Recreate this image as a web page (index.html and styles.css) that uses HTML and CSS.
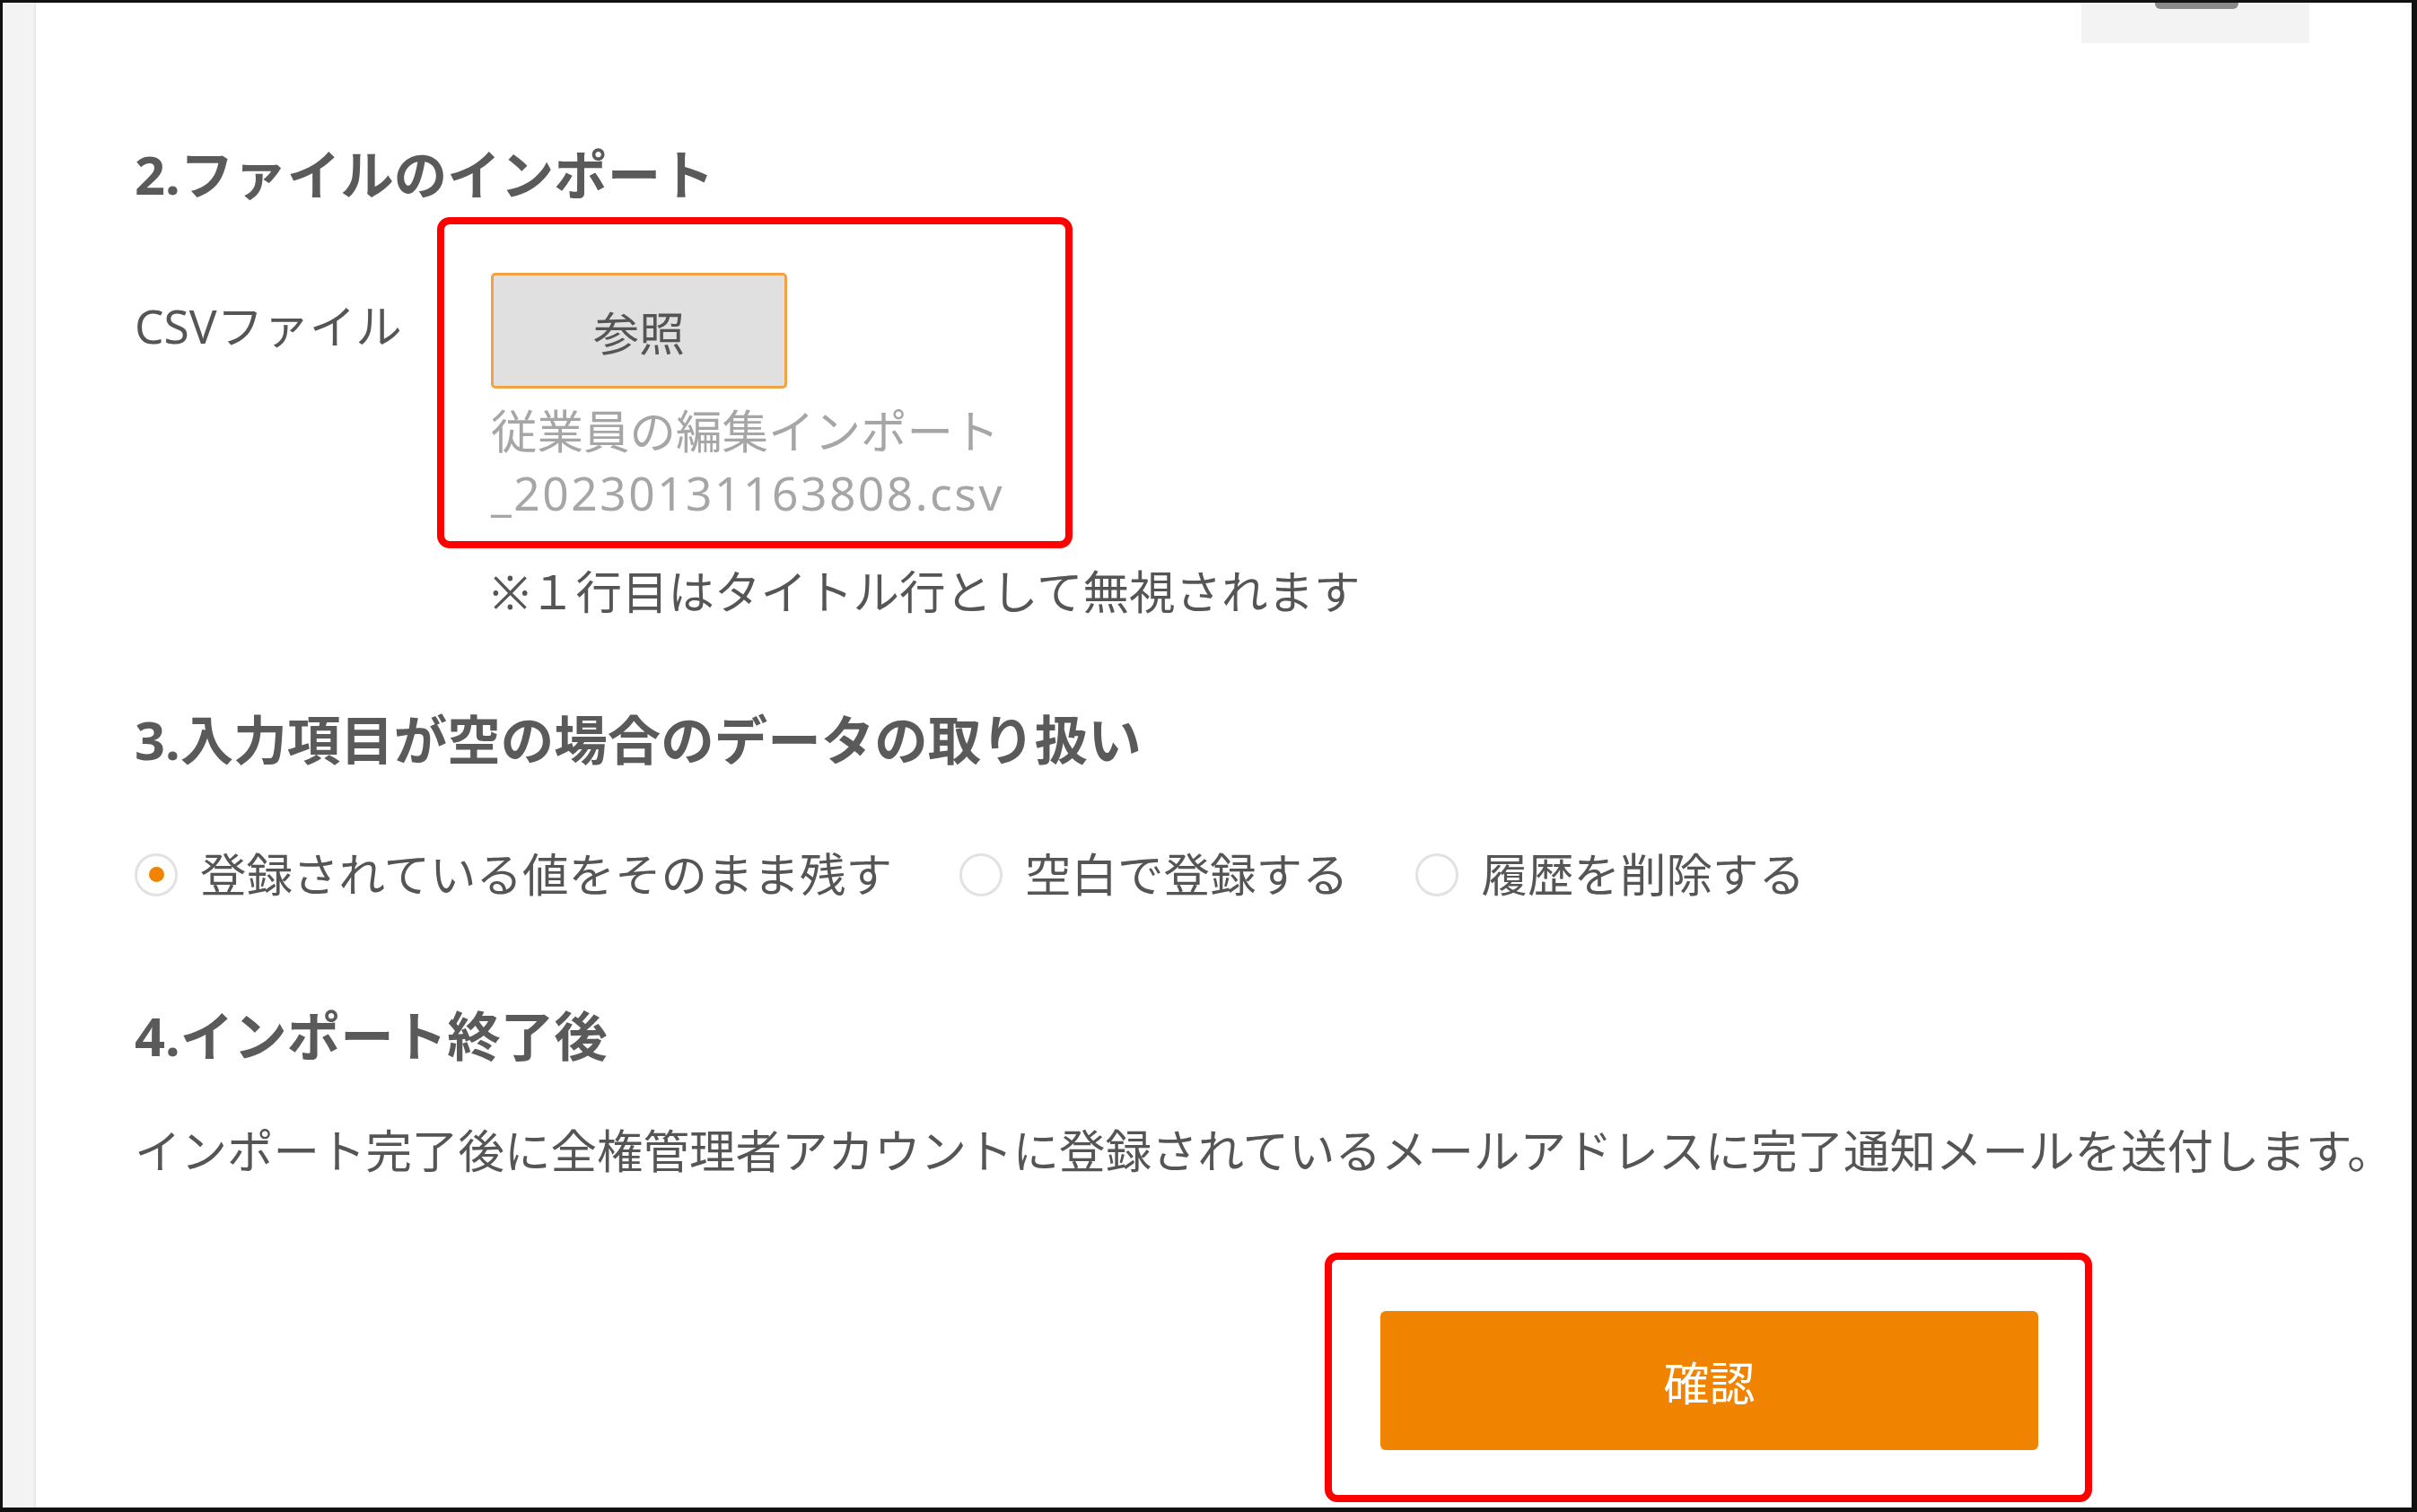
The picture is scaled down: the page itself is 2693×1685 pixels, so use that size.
FILE: index.html
```html
<!DOCTYPE html>
<html lang="ja">
<head>
    <meta charset="UTF-8">
    <meta name="viewport" content="width=device-width, initial-scale=1.0">
    <title>従業員のインポート</title>
    <link rel="stylesheet" href="styles.css">
</head>
<body>
    <div class="frame">
        <div class="side"></div>

        <div class="main">
            <div class="top-bar">
                <div class="top-tab"><span class="tab-grip"></span></div>
            </div>

            <h2 class="step">2.ファイルのインポート</h2>
            <div class="field">
                <div class="field-label">CSVファイル</div>
                <div class="field-body">
                    <div class="mark mark-file"></div>
                    <button class="browse-btn">参照</button>
                    <div class="file-name">従業員の編集インポート<br><span class="file-stamp">_20230131163808.csv</span></div>
                    <p class="note">※１行目はタイトル行として無視されます</p>
                </div>
            </div>

            <h2 class="step step-3">3.入力項目が空の場合のデータの取り扱い</h2>
            <div class="radios">
                <label class="radio"><span class="radio-dot checked"></span>登録されている値をそのまま残す</label>
                <label class="radio"><span class="radio-dot"></span>空白で登録する</label>
                <label class="radio"><span class="radio-dot"></span>履歴を削除する</label>
            </div>

            <h2 class="step step-4">4.インポート終了後</h2>
            <p class="desc">インポート完了後に全権管理者アカウントに登録されているメールアドレスに完了通知メールを送付します。</p>

            <div class="actions">
                <div class="mark mark-submit"></div>
                <button class="submit-btn">確認</button>
            </div>
        </div>
    </div>
</body>
</html>
```
FILE: styles.css
```css
* { margin: 0; padding: 0; box-sizing: border-box; }
html, body { height: 100%; }
body {
    font-family: "Noto Sans", "Noto Sans CJK JP", sans-serif;
    color: #555; background: #fff; overflow: hidden;
}
.frame {
    display: flex; width: 100vw; height: 100vh;
    border: 3px solid #111; border-right-width: 6px; border-bottom-width: 5px;
}
.side { width: 37px; flex: none; background: #f3f3f3; border-right: 2px solid #e8e8e8; }
.main { flex: 1; padding-left: 110px; font-size: 51.5px; line-height: 69px; }

.top-bar { display: flex; justify-content: flex-end; padding-right: 114px; height: 45px; }
.top-tab {
    width: 254px; height: 45px; background: #f3f3f3;
    display: flex; justify-content: center;
}
.tab-grip { display: block; width: 93px; height: 7px; margin-left: 2px; background: #8a8a8a; border-radius: 0 0 6px 6px; }

.step { font-size: 59.5px; line-height: 80px; font-weight: 700; color: #5a5a5a; margin-top: 106px; }
.step-3 { margin-top: 90px; }
.step-4 { margin-top: 105px; }

.field { display: flex; margin-top: 70px; }
.field-label { width: 397px; flex: none; padding-top: 25px; }
.field-body { position: relative; }
.browse-btn {
    width: 330px; height: 129px; background: #e0e0e0; color: #555;
    border: 3px solid #f2a244; border-radius: 5px;
    font-family: inherit; font-size: 51px; cursor: pointer;
}
.file-name { color: #a6a6a6; margin-top: 13px; }
.file-stamp { letter-spacing: 2.5px; }
.note { margin-top: 41px; }

.radios { display: flex; margin-top: 76px; }
.radio { display: flex; align-items: center; margin-right: 75px; cursor: pointer; }
.radio-dot {
    width: 48px; height: 48px; border-radius: 50%; border: 3px solid #e2e2e2;
    margin-right: 25px; display: flex; align-items: center; justify-content: center;
}
.radio-dot.checked::after {
    content: ""; width: 17px; height: 17px; border-radius: 50%; background: #f08300;
}

.desc { margin-top: 54px; white-space: nowrap; }

.actions { position: relative; margin-top: 144px; margin-left: 1388px; width: 733px; }
.submit-btn {
    width: 733px; height: 155px; background: #f08300; color: #fff; border: none;
    border-radius: 6px; font-family: inherit; font-size: 51px; cursor: pointer;
}

/* red annotation frames */
.mark { position: absolute; border: 8px solid #ff0000; border-radius: 14px; pointer-events: none; }
.mark-file { left: -60px; top: -62px; width: 708px; height: 369px; }
.mark-submit { left: -62px; top: -65px; width: 855px; height: 278px; }
```
